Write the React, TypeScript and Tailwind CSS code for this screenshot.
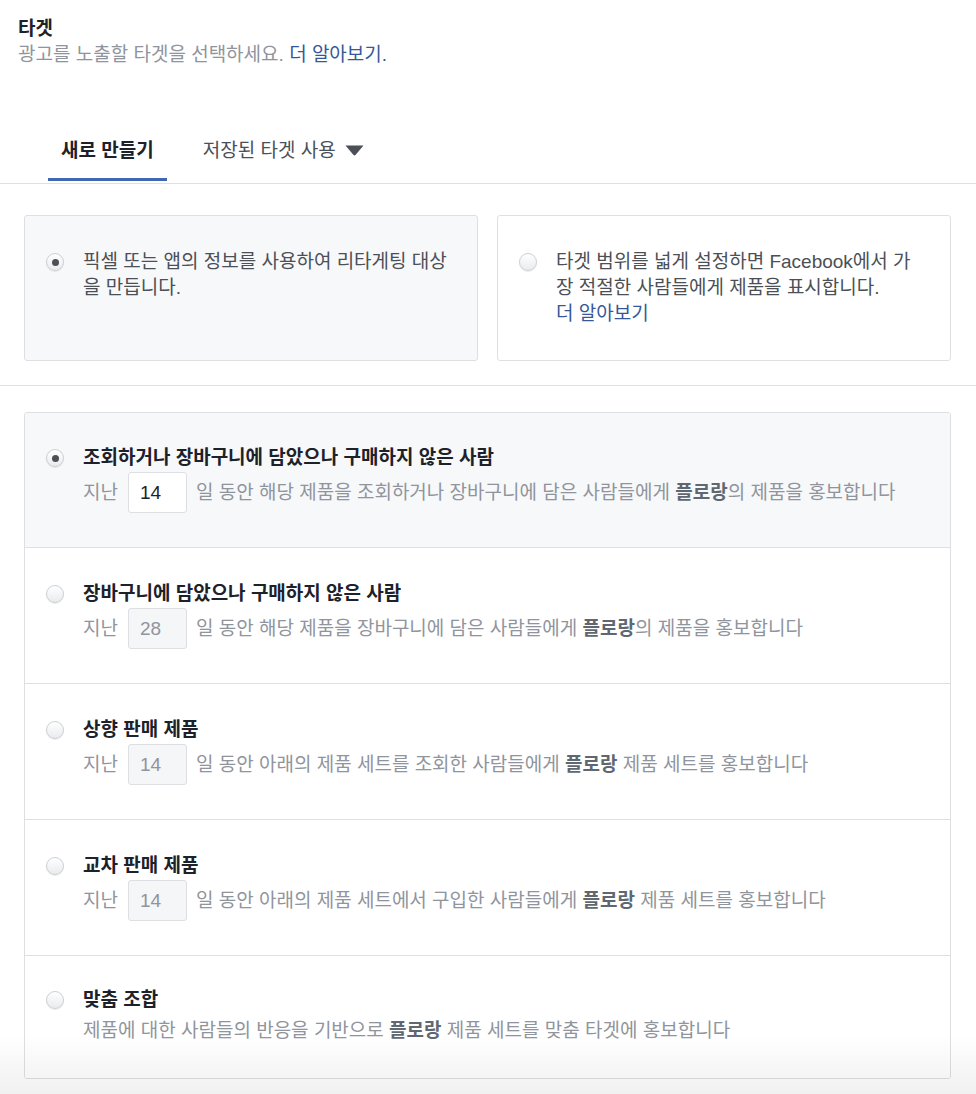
const font = { fontFamily: '"Liberation Sans", "Noto Sans CJK KR", sans-serif' };

function Radio({ checked }: { checked?: boolean }) {
  return (
    <span className="mt-[4px] flex h-[18px] w-[18px] shrink-0 items-center justify-center rounded-full border border-[#ccd0d5] bg-gradient-to-b from-white to-[#e9ebee] shadow-[0_1px_1px_rgba(0,0,0,0.08)]">
      {checked && <span className="h-[7px] w-[7px] rounded-full bg-[#4b4f56]" />}
    </span>
  );
}

type Row = {
  title: string;
  days?: string;
  active?: boolean;
  before: string;
  after: string;
};

const rows: Row[] = [
  {
    title: '조회하거나 장바구니에 담았으나 구매하지 않은 사람',
    days: '14',
    active: true,
    before: '일 동안 해당 제품을 조회하거나 장바구니에 담은 사람들에게 ',
    after: '의 제품을 홍보합니다',
  },
  {
    title: '장바구니에 담았으나 구매하지 않은 사람',
    days: '28',
    before: '일 동안 해당 제품을 장바구니에 담은 사람들에게 ',
    after: '의 제품을 홍보합니다',
  },
  {
    title: '상향 판매 제품',
    days: '14',
    before: '일 동안 아래의 제품 세트를 조회한 사람들에게 ',
    after: ' 제품 세트를 홍보합니다',
  },
  {
    title: '교차 판매 제품',
    days: '14',
    before: '일 동안 아래의 제품 세트에서 구입한 사람들에게 ',
    after: ' 제품 세트를 홍보합니다',
  },
  {
    title: '맞춤 조합',
    before: '제품에 대한 사람들의 반응을 기반으로 ',
    after: ' 제품 세트를 맞춤 타겟에 홍보합니다',
  },
];

export default function App() {
  return (
    <div className="relative min-h-[1094px] bg-white text-[19px] text-[#4b4f56]" style={font}>
      {/* header */}
      <div className="pl-[18px] pt-[16px]">
        <div className="font-bold leading-[26px] text-[#1d2129]">타겟</div>
        <div className="leading-[26px] text-[#90949c]">
          광고를 노출할 타겟을 선택하세요. <span className="text-[#365899]">더 알아보기.</span>
        </div>
      </div>

      {/* tabs */}
      <div className="mt-[70px] flex border-b border-[#dddfe2] pl-[48px]">
        <div className="mb-[2px] border-b-[3px] border-[#4267b2] px-[13px] pb-[14px] font-bold leading-[26px] text-[#1d2129]">
          새로 만들기
        </div>
        <div className="ml-[23px] flex items-start gap-[9px] px-[13px] pb-[19px] leading-[26px] text-[#4b4f56]">
          저장된 타겟 사용
          <svg width="19" height="11" viewBox="0 0 19 11" className="mt-[7px]">
            <path d="M0.5 0.5 H18.5 L10.7 9.8 Q9.5 11 8.3 9.8 Z" fill="#4b4f56" />
          </svg>
        </div>
      </div>

      {/* type cards */}
      <div className="grid grid-cols-2 gap-[19px] border-b border-[#dddfe2] pb-[24px] pl-[24px] pr-[25px] pt-[31px]">
        <div className="flex gap-[19px] rounded-[3px] border border-[#dddfe2] bg-[#f7f8fa] pb-[33px] pl-[21px] pr-[22px] pt-[33px]">
          <Radio checked />
          <p className="break-all leading-[26px]">픽셀 또는 앱의 정보를 사용하여 리타게팅 대상을 만듭니다.</p>
        </div>
        <div className="flex gap-[19px] rounded-[3px] border border-[#dddfe2] bg-white pb-[33px] pl-[21px] pr-[22px] pt-[33px]">
          <Radio />
          <p className="break-all leading-[26px]">
            타겟 범위를 넓게 설정하면 Facebook에서 가장 적절한 사람들에게 제품을 표시합니다.
            <br />
            <span className="text-[#365899]">더 알아보기</span>
          </p>
        </div>
      </div>

      {/* retargeting options */}
      <div className="pb-[16px] pl-[24px] pr-[25px] pt-[26px]">
        <div className="overflow-hidden rounded-[3px] border border-[#dddfe2]">
          {rows.map((r, i) => (
            <div
              key={i}
              className={`flex gap-[19px] pl-[21px] pr-[20px] ${i > 0 ? 'border-t border-[#dddfe2]' : 'pt-[32px]'} ${r.active ? 'bg-[#f7f8fa]' : 'bg-white'} ${r.days ? (i > 0 ? 'pb-[34px] pt-[33px]' : 'pb-[34px]') : 'pb-[34px] pt-[31px]'}`}
            >
              <Radio checked={r.active} />
              <div>
                <div className="font-bold leading-[26px] text-[#1d2129]">{r.title}</div>
                {r.days ? (
                  <div className="mt-[1px] flex items-center leading-[26px] text-[#90949c]">
                    <span>지난</span>
                    <span
                      className={`ml-[10px] mr-[9px] flex h-[41px] w-[59px] items-center rounded-[3px] border border-[#dddfe2] pl-[11px] ${r.active ? 'bg-white text-[#1d2129]' : 'bg-[#f5f6f7] text-[#90949c]'}`}
                    >
                      {r.days}
                    </span>
                    <span>
                      {r.before}
                      <b className="text-[#606770]">플로랑</b>
                      {r.after}
                    </span>
                  </div>
                ) : (
                  <div className="mt-[5px] leading-[26px] text-[#90949c]">
                    {r.before}
                    <b className="text-[#606770]">플로랑</b>
                    {r.after}
                  </div>
                )}
              </div>
            </div>
          ))}
        </div>
      </div>

      {/* bottom fade */}
      <div className="pointer-events-none absolute inset-x-0 bottom-0 h-[60px] bg-gradient-to-b from-transparent to-[rgba(0,0,0,0.06)]" />
    </div>
  );
}
